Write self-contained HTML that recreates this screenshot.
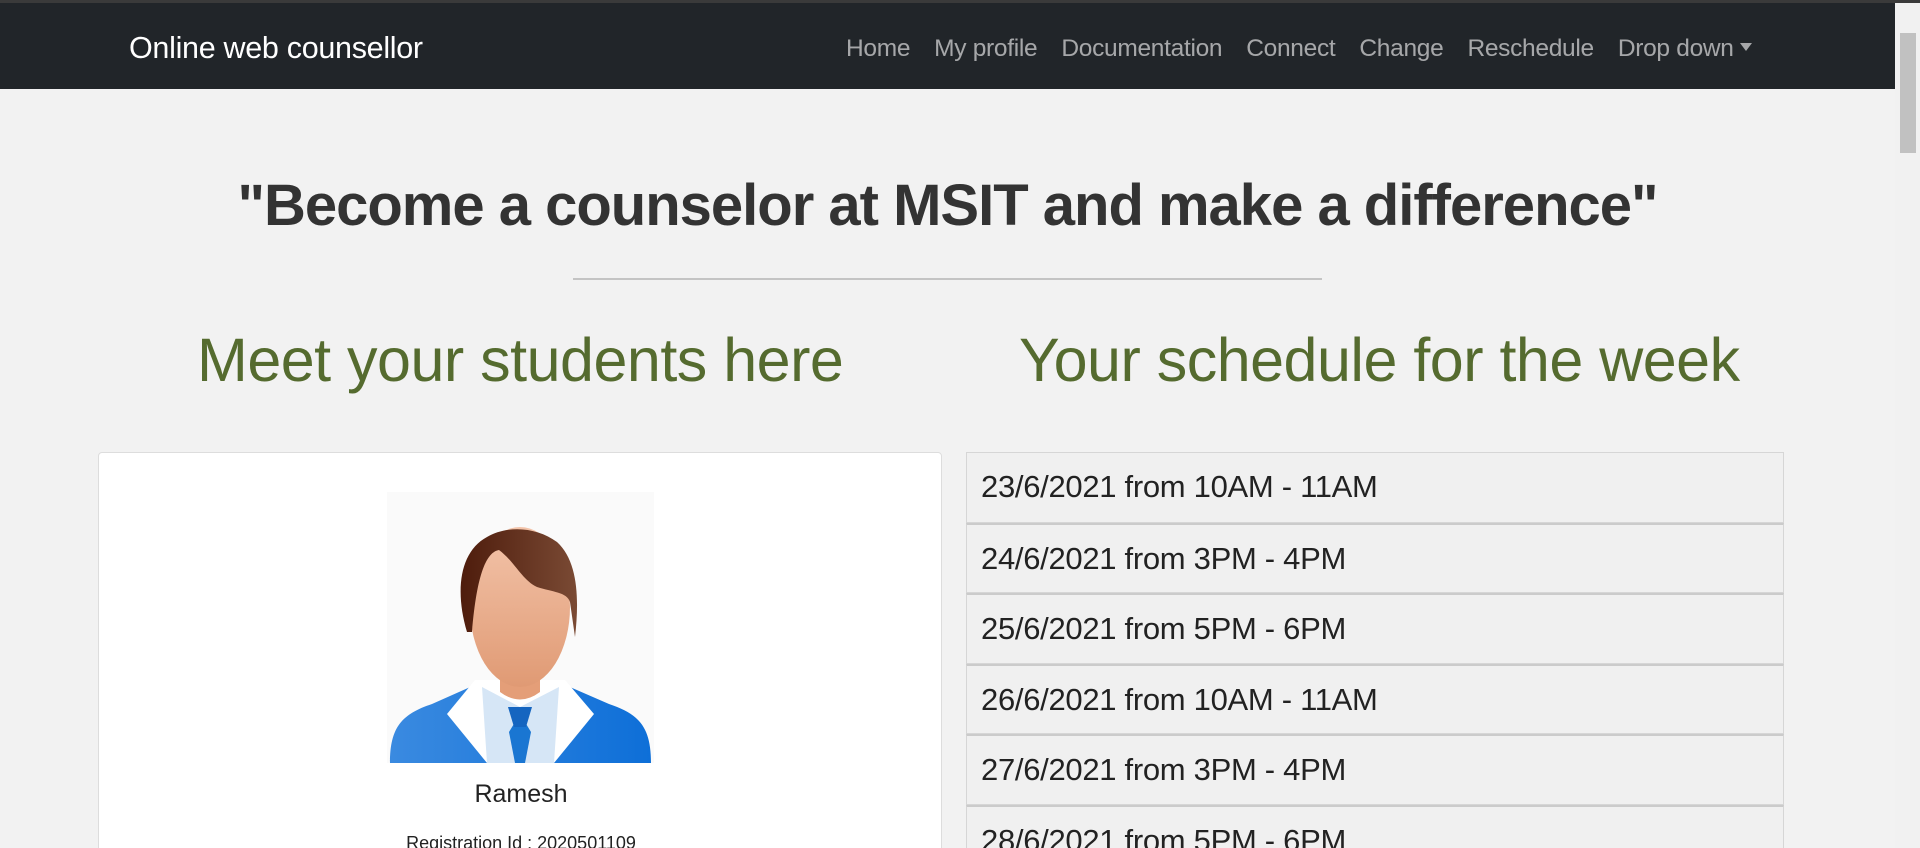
<!DOCTYPE html>
<html><head><meta charset="utf-8"><style>
*{margin:0;padding:0;box-sizing:border-box}
html,body{width:1920px;height:848px;overflow:hidden;background:#f2f2f2;font-family:"Liberation Sans",sans-serif}
#w{position:relative;width:1920px;height:848px;overflow:hidden}
.topline{position:absolute;left:0;top:0;width:1920px;height:3px;background:#3a3a3a}
.nav{position:absolute;left:0;top:3px;width:1895px;height:86px;background:#212529}
.brand{position:absolute;left:129px;top:28px;font-size:30.5px;color:#fff;letter-spacing:-0.3px}
.links{position:absolute;left:846px;top:32px;font-size:24.5px;color:rgba(255,255,255,.6);white-space:nowrap;letter-spacing:-0.3px}
.links span{margin-right:24px}
.caret{display:inline-block;width:0;height:0;border-left:6px solid transparent;border-right:6px solid transparent;border-top:8px solid rgba(255,255,255,.6);vertical-align:5px;margin-left:6px}
.sb{position:absolute;left:1895px;top:3px;width:25px;height:845px;background:#f1f1f1}
.sb .th{position:absolute;left:5px;top:30px;width:16px;height:120px;background:#c1c1c1}
h1{position:absolute;left:0;width:1895px;top:172px;text-align:center;font-size:58px;color:#333;letter-spacing:-1px;font-weight:bold}
.hr{position:absolute;left:573px;top:278px;width:749px;height:2px;background:#c4c4c4}
.g{position:absolute;top:325px;font-size:61px;color:#556b2f;letter-spacing:-0.5px;white-space:nowrap}
.card{position:absolute;left:98px;top:452px;width:844px;height:460px;background:#fff;border:1px solid #ddd;border-radius:4px}
.name{position:absolute;left:0;width:844px;top:327px;text-align:center;font-size:25px;color:#222}
.reg{position:absolute;left:0;width:844px;top:380px;text-align:center;font-size:18px;color:#222}
.list{position:absolute;left:966px;top:452px;width:818px}
.item{height:70.6px;background:#f0f0f0;border:1px solid #d6d6d6;border-top:2px solid #cbcbcb;padding-left:14px;font-size:31px;color:#222;line-height:68px;letter-spacing:-0.3px}
.item:first-child{border-top:1px solid #d6d6d6}
</style></head><body><div id="w">
<div class="topline"></div>
<div class="nav">
<div class="brand">Online web counsellor</div>
<div class="links"><span>Home</span><span>My profile</span><span>Documentation</span><span>Connect</span><span>Change</span><span>Reschedule</span><span style="margin:0">Drop down<i class="caret"></i></span></div>
</div>
<h1>"Become a counselor at MSIT and make a difference"</h1>
<div class="hr"></div>
<div class="g" style="left:197px">Meet your students here</div>
<div class="g" style="left:1019px">Your schedule for the week</div>
<div class="card">
<svg style="position:absolute;left:288px;top:39px" width="267" height="271" viewBox="0 0 267 271">
<defs>
<linearGradient id="f" x1="0" y1="0" x2="0" y2="1"><stop offset="0" stop-color="#f3c4aa"/><stop offset="1" stop-color="#e09a74"/></linearGradient>
<linearGradient id="h" x1="0" y1="0" x2="1" y2="0"><stop offset="0" stop-color="#4e1c0c"/><stop offset="1" stop-color="#7a4a34"/></linearGradient>
<linearGradient id="b" x1="0" y1="0" x2="1" y2="0"><stop offset="0" stop-color="#3a8ae0"/><stop offset="1" stop-color="#0e6fd8"/></linearGradient>
</defs>
<rect width="267" height="271" fill="#fafafa"/>
<path d="M3 271 C3 235 15 222 45 212 L90 192 L176 192 L222 212 C252 222 264 235 264 271Z" fill="url(#b)"/>
<path d="M88 188 L60 222 L100 271 L167 271 L207 222 L178 188Z" fill="#fff"/>
<path d="M95 195 L100 271 L167 271 L172 195 L133 215Z" fill="#d6e6f6"/>
<path d="M113 150 L153 150 L153 200 Q133 215 113 200Z" fill="#e49e78"/>
<ellipse cx="133" cy="115" rx="50" ry="80" fill="url(#f)"/>
<path d="M80 140 C68 100 72 60 100 45 C120 33 150 35 170 50 C192 70 192 110 188 145 L183 110 C180 100 165 100 150 95 C135 88 128 70 112 58 C100 60 90 80 85 140Z" fill="url(#h)"/>
<path d="M133 222 L122 240 L128 271 L138 271 L144 240Z" fill="#1a76d2"/>
<path d="M121 215 L145 215 L139 235 L127 235Z" fill="#1565c0"/>
</svg>
<div class="name">Ramesh</div>
<div class="reg">Registration Id : 2020501109</div>
</div>
<div class="list">
<div class="item">23/6/2021 from 10AM - 11AM</div>
<div class="item">24/6/2021 from 3PM - 4PM</div>
<div class="item">25/6/2021 from 5PM - 6PM</div>
<div class="item">26/6/2021 from 10AM - 11AM</div>
<div class="item">27/6/2021 from 3PM - 4PM</div>
<div class="item">28/6/2021 from 5PM - 6PM</div>
</div>
<div class="sb"><div class="th"></div></div>
</div></body></html>
